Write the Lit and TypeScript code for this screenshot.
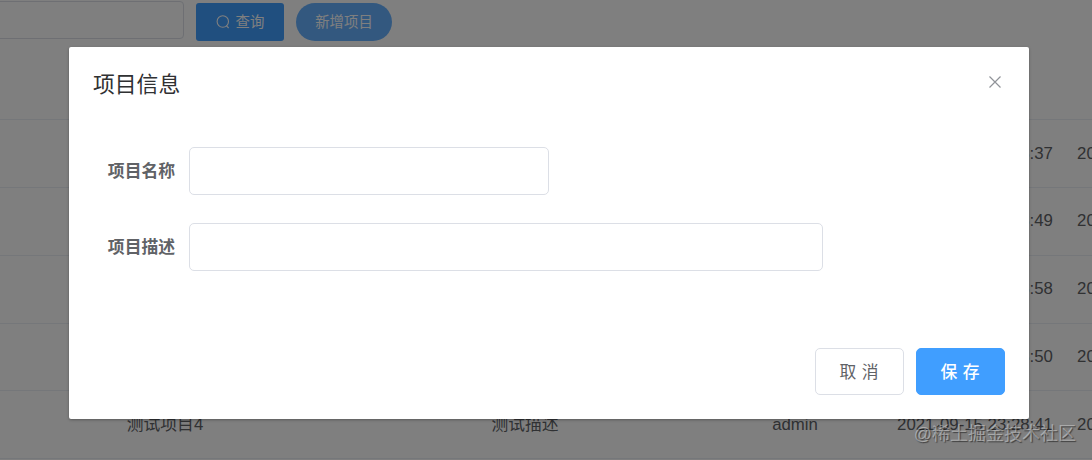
import { LitElement, css, html } from 'lit'
import { repeat } from 'lit/directives/repeat.js'

interface ProjectRow {
  name: string
  desc: string
  owner: string
  created: string
  updated: string
}

// rows behind the dialog only fill the date columns
const dated = (created: string): ProjectRow => ({ name: '', desc: '', owner: '', created, updated: created })

const ROWS: ProjectRow[] = [
  dated('2021-09-15 23:28:37'),
  dated('2021-09-15 23:28:49'),
  dated('2021-09-15 23:28:58'),
  dated('2021-09-15 23:28:50'),
  { ...dated('2021-09-15 23:28:41'), name: '测试项目4', desc: '测试描述', owner: 'admin' },
]

export class ProjectTable extends LitElement {
  static properties = {
    rows: { attribute: false },
  }

  declare rows: ProjectRow[]

  constructor() {
    super()
    this.rows = []
  }

  static styles = css`
    :host {
      display: block;
      width: 1260px;
      margin-left: -15px;
      font-size: 16.8px;
      line-height: 24px;
      color: #606266;
    }
    .row {
      display: grid;
      grid-template-columns: 360px 360px 180px 180px 180px;
      align-items: center;
      box-sizing: border-box;
      height: 67.8px;
      border-bottom: 1px solid #ebeef5;
      text-align: center;
      white-space: nowrap;
    }
  `

  render() {
    return html`
      <div class="row"></div>
      ${repeat(
        this.rows,
        (r) => r.created,
        (r) => html`
          <div class="row">
            <div>${r.name}</div>
            <div>${r.desc}</div>
            <div>${r.owner}</div>
            <div>${r.created}</div>
            <div>${r.updated}</div>
          </div>
        `,
      )}
    `
  }
}

customElements.define('project-table', ProjectTable)

export class ProjectDialog extends LitElement {
  static styles = css`
    :host {
      display: flex;
      flex-direction: column;
      box-sizing: border-box;
      width: 960px;
      height: 372px;
      padding: 24px;
      background: #fff;
      border-radius: 2px;
      box-shadow: 0 1px 3px rgba(0, 0, 0, 0.3);
    }
    header {
      display: flex;
      justify-content: space-between;
      height: 28px;
      margin-bottom: 48px;
    }
    h2 {
      margin: 0;
      font-size: 21.8px;
      line-height: 28px;
      font-weight: 400;
      color: #303133;
    }
    .close {
      width: 12px;
      height: 12px;
      margin: 5px 4px 0 0;
      stroke: #909399;
      stroke-width: 1.2;
    }
    .field {
      display: flex;
      align-items: center;
      gap: 14px;
      height: 48px;
      margin-bottom: 28px;
    }
    label {
      width: 82px;
      padding-bottom: 2px;
      text-align: right;
      font-size: 16.8px;
      font-weight: 700;
      color: #606266;
    }
    input {
      box-sizing: border-box;
      height: 48px;
      padding: 0 18px;
      border: 1px solid #dcdfe6;
      border-radius: 5px;
      background: #fff;
      outline: none;
    }
    .name {
      width: 360px;
    }
    .desc {
      width: 634px;
    }
    footer {
      display: flex;
      justify-content: flex-end;
      gap: 12px;
      margin-top: auto;
    }
    button {
      box-sizing: border-box;
      width: 89px;
      height: 47px;
      padding: 0 1px 2px 0;
      border: 1px solid #dcdfe6;
      border-radius: 5px;
      background: #fff;
      color: #606266;
      font: inherit;
      font-size: 16.8px;
      word-spacing: 1px;
    }
    .primary {
      border-color: #409eff;
      background: #409eff;
      color: #fff;
      font-weight: 500;
    }
  `

  render() {
    return html`
      <header>
        <h2>项目信息</h2>
        <svg class="close" viewBox="0 0 12 12"><path d="M.5 .5 11.5 11.5M11.5 .5 .5 11.5" /></svg>
      </header>
      <div class="field"><label>项目名称</label><input class="name" /></div>
      <div class="field"><label>项目描述</label><input class="desc" /></div>
      <footer>
        <button>取 消</button>
        <button class="primary">保 存</button>
      </footer>
    `
  }
}

customElements.define('project-dialog', ProjectDialog)

export class AppRoot extends LitElement {
  static styles = css`
    :host {
      display: block;
      position: relative;
      height: 460px;
      overflow: hidden;
      background: #fff;
      font-family: 'Liberation Sans', 'Noto Sans CJK SC', sans-serif;
    }
    .toolbar {
      display: flex;
      align-items: flex-start;
      gap: 12px;
      height: 52.4px;
    }
    .toolbar input {
      box-sizing: border-box;
      width: 190px;
      height: 38px;
      margin: 1px 0 0 -6px;
      border: 1px solid #dcdfe6;
      border-radius: 4px;
      background: #fff;
    }
    .toolbar button {
      box-sizing: border-box;
      display: flex;
      align-items: center;
      justify-content: center;
      gap: 6px;
      height: 38px;
      margin-top: 3px;
      padding: 0 0 3px;
      border: 0;
      color: #fff;
      font: inherit;
      font-size: 14.4px;
    }
    .toolbar svg {
      width: 14px;
      height: 14px;
      margin-top: 2px;
      fill: none;
      stroke: #fff;
      stroke-width: 1.1;
    }
    .search {
      width: 88px;
      border-radius: 3px;
      background: #409eff;
    }
    .add {
      width: 96px;
      border-radius: 19px;
      background: #66b1ff;
    }
    .mask {
      position: absolute;
      inset: 0;
      display: flex;
      justify-content: center;
      align-items: flex-start;
      box-sizing: border-box;
      padding: 47px 0 0 6px;
      background: rgba(0, 0, 0, 0.5);
    }
    .watermark {
      position: absolute;
      right: 16px;
      bottom: 13px;
      font-size: 18px;
      line-height: 26px;
      white-space: nowrap;
      color: rgba(255, 255, 255, 0.4);
      text-shadow: 1px 1px 1px rgba(0, 0, 0, 0.5);
    }
  `

  render() {
    return html`
      <div class="toolbar">
        <input />
        <button class="search">
          <svg viewBox="0 0 14 14"><circle cx="6.8" cy="6.5" r="5.7" /><path d="M10.3 10.7 12.6 13" /></svg>
          查询
        </button>
        <button class="add">新增项目</button>
      </div>
      <project-table .rows=${ROWS}></project-table>
      <div class="mask"><project-dialog></project-dialog></div>
      <div class="watermark">@稀土掘金技术社区</div>
    `
  }
}

customElements.define('app-root', AppRoot)

declare global {
  interface HTMLElementTagNameMap {
    'app-root': AppRoot
    'project-dialog': ProjectDialog
    'project-table': ProjectTable
  }
}
